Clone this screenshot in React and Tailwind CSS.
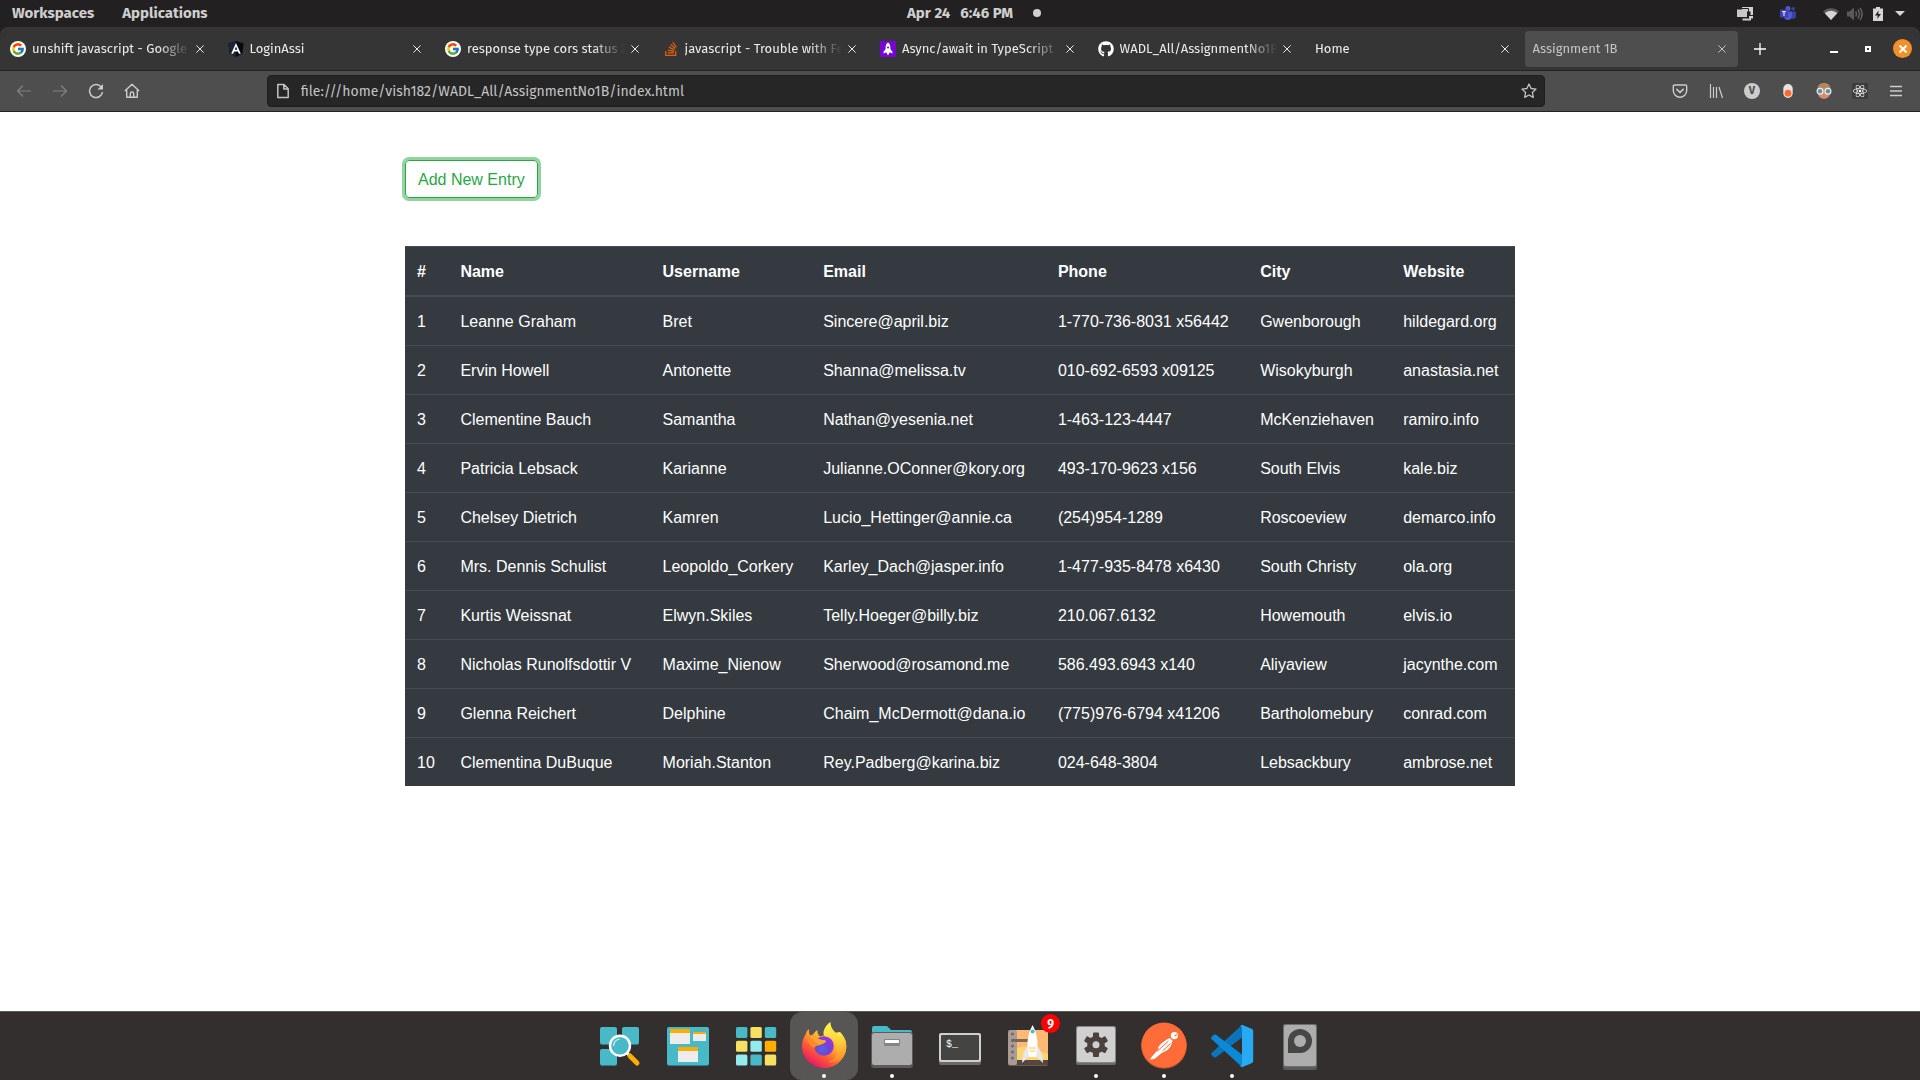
import React from "react";
import { FcGoogle } from "react-icons/fc";
import { FaGithub, FaReact, FaStackOverflow } from "react-icons/fa";

const users = [
  ["1", "Leanne Graham", "Bret", "Sincere@april.biz", "1-770-736-8031 x56442", "Gwenborough", "hildegard.org"],
  ["2", "Ervin Howell", "Antonette", "Shanna@melissa.tv", "010-692-6593 x09125", "Wisokyburgh", "anastasia.net"],
  ["3", "Clementine Bauch", "Samantha", "Nathan@yesenia.net", "1-463-123-4447", "McKenziehaven", "ramiro.info"],
  ["4", "Patricia Lebsack", "Karianne", "Julianne.OConner@kory.org", "493-170-9623 x156", "South Elvis", "kale.biz"],
  ["5", "Chelsey Dietrich", "Kamren", "Lucio_Hettinger@annie.ca", "(254)954-1289", "Roscoeview", "demarco.info"],
  ["6", "Mrs. Dennis Schulist", "Leopoldo_Corkery", "Karley_Dach@jasper.info", "1-477-935-8478 x6430", "South Christy", "ola.org"],
  ["7", "Kurtis Weissnat", "Elwyn.Skiles", "Telly.Hoeger@billy.biz", "210.067.6132", "Howemouth", "elvis.io"],
  ["8", "Nicholas Runolfsdottir V", "Maxime_Nienow", "Sherwood@rosamond.me", "586.493.6943 x140", "Aliyaview", "jacynthe.com"],
  ["9", "Glenna Reichert", "Delphine", "Chaim_McDermott@dana.io", "(775)976-6794 x41206", "Bartholomebury", "conrad.com"],
  ["10", "Clementina DuBuque", "Moriah.Stanton", "Rey.Padberg@karina.biz", "024-648-3804", "Lebsackbury", "ambrose.net"],
];

const columns = ["#", "Name", "Username", "Email", "Phone", "City", "Website"];

/* ---------- favicons ---------- */

const GoogleIcon = () => (
  <span className="flex size-4 items-center justify-center rounded-full bg-white">
    <FcGoogle className="size-3.5" />
  </span>
);

const AngularIcon = () => (
  <svg viewBox="0 0 16 16" className="size-4">
    <path d="M8 0l7.6 2.6-1.2 10L8 16l-6.4-3.4-1.2-10z" fill="#050a14" />
    <path d="M8 0L.4 2.6l1.2 10L8 16z" fill="#1b2434" />
    <path d="M8 2L3.2 12.8h1.9l1-2.4h3.8l1 2.4h1.9zm0 3.6l1.3 3.2H6.7z" fill="#fff" />
  </svg>
);

const RocketBadge = () => (
  <svg viewBox="0 0 16 16" className="size-4">
    <rect width="16" height="16" fill="#7604d4" />
    <path d="M8 1.6c1.8 1.3 2.4 3 2.4 5v1.6l2 2.2v2.2l-2.4-1H9.6L8 14.4l-1.6-2.8H6l-2.4 1v-2.2l2-2.2V6.600c0-2 .6-3.700 2.400-5z" fill="#fff" />
    <circle cx="8" cy="6.400" r="1" fill="#7604d4" />
  </svg>
);

const tabs = [
  { title: "unshift javascript - Google", icon: <GoogleIcon /> },
  { title: "LoginAssi", icon: <AngularIcon /> },
  { title: "response type cors status 2", icon: <GoogleIcon /> },
  { title: "javascript - Trouble with Fe", icon: <FaStackOverflow className="size-4 text-[#e0600f]" /> },
  { title: "Async/await in TypeScript -", icon: <RocketBadge /> },
  { title: "WADL_All/AssignmentNo1B", icon: <FaGithub className="size-4 text-white" /> },
  { title: "Home" },
  { title: "Assignment 1B", active: true },
];

const Cross = ({ className }) => (
  <svg viewBox="0 0 8 8" className={className} fill="none" stroke="currentColor">
    <path d="M.4.400l7.200 7.200M7.600.400L.4 7.600" />
  </svg>
);

/* ---------- desktop panel ---------- */

function TopBar() {
  return (
    <header className="flex h-[27px] shrink-0 items-center bg-[#232021] text-[#cfcfcf]">
      <nav className="flex flex-1 gap-7 pb-0.5 pl-3 text-[15px] leading-5 font-bold">
        <button>Workspaces</button>
        <button>Applications</button>
      </nav>
      <button className="flex items-center pb-0.5 pl-7 text-[15px] leading-5 font-bold">
        <span className="mr-2.5">Apr 24</span>
        <span className="mr-5">6:46 PM</span>
        <span className="size-2 rounded-full bg-[#d0d0d0]" />
      </button>
      <div className="flex flex-1 items-center justify-end pr-3">
        <button aria-label="Window tiling" className="mr-[27px]">
          <svg viewBox="0 0 16 14" className="h-3.5 w-4">
            <path d="M5 0h11v8h-2.500V4.500H5zM14 9.500v4H5.500v-2h7v-2z" fill="#d0d0d0" />
            <rect y="2.500" width="10" height="7.500" fill="#c8c8c8" />
            <path d="M5 1.500h6.500v10" fill="none" stroke="#232021" />
            <rect x="12" y="9" width="4" height="2.500" fill="#d0d0d0" />
          </svg>
        </button>
        <button aria-label="Teams" className="mr-[27px]">
          <svg viewBox="0 0 16 15" className="h-[15px] w-4">
            <circle cx="8" cy="2.600" r="2.500" fill="#4f58d0" />
            <circle cx="13.200" cy="2.800" r="1.800" fill="#3940a8" />
            <path d="M11 5.500h5v5a3 3 0 01-5 1.500z" fill="#3940a8" />
            <path d="M4 5.500h8v5a4.200 4.200 0 01-8 1z" fill="#4f58d0" />
            <rect y="3.500" width="8" height="8" rx="1" fill="#3b43b5" />
            <path d="M2.200 5.700h3.600M4 5.700v4.200" stroke="#fff" />
          </svg>
        </button>
        <button aria-label="Wi-Fi" className="mr-2">
          <svg viewBox="0 0 16 12" className="h-3 w-4">
            <path d="M0 3.500C4-1 12-1 16 3.500L8 12z" fill="#5d5b5b" />
            <path d="M1.800 5.300c3.500-3.400 8.900-3.400 12.400 0L8 12z" fill="#d6d6d6" />
          </svg>
        </button>
        <button aria-label="Volume" className="mr-2.5">
          <svg viewBox="0 0 16 14" className="h-3.5 w-4" fill="none" stroke="#625f60" strokeWidth="1.500">
            <path d="M0 4.500h2.500L7 .5v13l-4.500-4H0z" fill="#5b5959" stroke="none" />
            <path d="M8.500 4.500q2 2.500 0 5M10.800 2.500q3.400 4.500 0 9M13 .800q4.200 6.200 0 12.400" />
          </svg>
        </button>
        <button aria-label="Battery charging" className="mr-3">
          <svg viewBox="0 0 10 14" className="h-3.5 w-2.5">
            <path d="M3 0h4v1.500h3V14H0V1.500h3z" fill="#d6d6d6" />
            <path d="M5.600 3.500L2 8.500h2.700L4.200 12l3.800-5H5.300z" fill="#232021" />
          </svg>
        </button>
        <button aria-label="System menu" className="mr-[3px]">
          <svg viewBox="0 0 10 5" className="h-[5px] w-2.5">
            <path d="M0 0h10L5 5z" fill="#d6d6d6" />
          </svg>
        </button>
      </div>
    </header>
  );
}

/* ---------- browser chrome ---------- */

function Tab({ title, icon, active }) {
  return (
    <div
      className={
        active
          ? "flex h-9 min-w-0 flex-1 items-center rounded bg-[#4e4e4e] pr-1.5 pl-2 text-[#c6c6c6]"
          : "flex h-9 min-w-0 flex-1 items-center pr-1.5 pl-2 text-[#ececec]"
      }
    >
      <button className="flex min-w-0 flex-1 items-center gap-1.5 text-left">
        {icon && <span className="shrink-0">{icon}</span>}
        <span className="min-w-0 flex-1 overflow-hidden whitespace-nowrap [mask-image:linear-gradient(to_left,transparent,black_32px)]">
          {title}
        </span>
      </button>
      <button aria-label={"Close " + title} className="flex w-5 shrink-0 justify-center">
        <Cross className="size-2" />
      </button>
    </div>
  );
}

function TabBar() {
  return (
    <div className="bg-[#232021]">
      <div className="flex h-[43px] items-center rounded-t-lg bg-[#353535] text-[13px] leading-5">
        <div className="flex min-w-0 flex-1 gap-1 pl-0.5">
          {tabs.map((tab) => (
            <Tab key={tab.title} {...tab} />
          ))}
        </div>
        <div className="flex w-[182px] shrink-0 items-center text-white">
          <button aria-label="New tab" className="flex w-11 justify-center">
            <svg viewBox="0 0 12 12" className="size-3" stroke="currentColor">
              <path d="M6 0v12M0 6h12" strokeWidth="1.300" />
            </svg>
          </button>
          <div className="flex flex-1 items-center justify-end pr-2">
            <button aria-label="Minimize" className="flex w-[34px] justify-center">
              <svg viewBox="0 0 8 8" className="size-2">
                <rect y="6" width="8" height="2" fill="currentColor" />
              </svg>
            </button>
            <button aria-label="Maximize" className="flex w-[34px] justify-center">
              <svg viewBox="0 0 6 6" className="size-1.5">
                <rect x="1" y="1" width="4" height="4" fill="none" stroke="currentColor" strokeWidth="2" />
              </svg>
            </button>
            <button aria-label="Close window" className="ml-2 flex size-[19px] items-center justify-center rounded-full bg-[#f58f2a]">
              <Cross className="size-2 stroke-[2px]" />
            </button>
          </div>
        </div>
      </div>
    </div>
  );
}

const NavButton = ({ label, muted, children }) => (
  <button
    aria-label={label}
    className={
      muted
        ? "flex h-8 w-9 items-center justify-center text-[#828282]"
        : "flex h-8 w-9 items-center justify-center text-[#cccccc]"
    }
  >
    {children}
  </button>
);

const line = { viewBox: "0 0 16 16", fill: "none", stroke: "currentColor", strokeWidth: 1.2, className: "size-4" };

function Toolbar() {
  return (
    <div className="flex h-[42px] shrink-0 items-center border-y border-[#232323] bg-[#4e4e4e] px-1.5">
      <div className="flex">
        <NavButton label="Back" muted>
          <svg {...line}><path d="M15 8H1.500M7 2.500L1.500 8 7 13.500" /></svg>
        </NavButton>
        <NavButton label="Forward" muted>
          <svg {...line}><path d="M1 8h13.500M9 2.500L14.500 8 9 13.500" /></svg>
        </NavButton>
        <NavButton label="Reload">
          <svg {...line}>
            <path d="M13.500 4.500A6.500 6.500 0 1014.500 9" strokeWidth="1.500" />
            <path d="M15 1v5.500H9.500z" fill="currentColor" stroke="none" />
          </svg>
        </NavButton>
        <NavButton label="Home">
          <svg {...line} strokeWidth="1.400">
            <path d="M.8 8L8 1.300 15.200 8M2.700 7v7.300h10.600V7M6.300 14v-3.300a1.700 1.700 0 013.400 0V14" strokeLinejoin="round" />
          </svg>
        </NavButton>
      </div>
      <div className="flex-1" />
      <div className="mx-0.5 flex h-8 flex-[11] items-center rounded border border-[#1f1f1f] bg-[#262626] px-[7px] text-[#c4c4c4]">
        <svg {...line} strokeWidth="1.500">
          <path d="M3.500 1.500h5.500l4.200 4.200v8.800H2.800V1.500zM8.800 1.500V6h4.400" strokeLinejoin="round" />
        </svg>
        <input
          aria-label="Address"
          defaultValue="file:///home/vish182/WADL_All/AssignmentNo1B/index.html"
          className="ml-2.5 min-w-0 flex-1 bg-transparent pt-0.5 text-[14px] leading-5 outline-none"
        />
        <button aria-label="Bookmark this page">
          <svg {...line} strokeWidth="1.300">
            <path d="M8 1l2.100 4.500 4.900.600-3.600 3.400.900 4.900L8 12l-4.300 2.400.900-4.900L1 6.100l4.900-.600z" strokeLinejoin="round" />
          </svg>
        </button>
      </div>
      <div className="flex-1" />
      <div className="flex">
        <NavButton label="Save to Pocket">
          <svg {...line} strokeWidth="1.400">
            <path d="M2.500 2h11q1.200 0 1.200 1.200V7.500a6.700 6.700 0 01-13.400 0V3.200Q1.300 2 2.500 2z" />
            <path d="M4.800 6.300L8 9.300l3.200-3" strokeWidth="1.600" strokeLinecap="round" />
          </svg>
        </NavButton>
        <NavButton label="Library">
          <svg {...line}><path d="M2.500 1v14M5.500 4v11M8.500 4v11M11 4l3.500 11" /></svg>
        </NavButton>
        <NavButton label="Account">
          <span className="flex size-4 items-center justify-center rounded-full bg-[#cccccc] text-[11px] leading-4 font-bold text-[#4e4e4e]">V</span>
        </NavButton>
        <NavButton label="Switch extension">
          <svg viewBox="0 0 16 16" className="size-4">
            <rect x="3.300" y="1" width="9.400" height="14" rx="4.700" fill="#e4e4e4" />
            <circle cx="8" cy="10.200" r="3.400" fill="#ff6a2a" />
          </svg>
        </NavButton>
        <NavButton label="Goggles extension">
          <svg viewBox="0 0 16 16" className="size-4">
            <path d="M2 6q0-6 6-6t6 6v4q0 5-6 6-6-1-6-6z" fill="#e2876a" />
            <path d="M1.500 7Q1 .500 8 .300 15 .500 14.500 7L12 4.500 8 5 4 4.500z" fill="#ad8a5c" />
            <circle cx="4" cy="8.300" r="2.900" fill="#4e97a6" stroke="#eee" strokeWidth="1.200" />
            <circle cx="12" cy="8.300" r="2.900" fill="#4e97a6" stroke="#eee" strokeWidth="1.200" />
          </svg>
        </NavButton>
        <NavButton label="React developer tools">
          <span className="flex size-4 items-center justify-center bg-[#3d3d3d]">
            <FaReact className="size-3.5 text-white" />
          </span>
        </NavButton>
        <NavButton label="Menu">
          <svg {...line} strokeWidth="1.300"><path d="M2 3.500h12M2 8h12M2 12.500h12" /></svg>
        </NavButton>
      </div>
    </div>
  );
}

/* ---------- page ---------- */

function Page() {
  return (
    <main className="flex-1 bg-white font-['Liberation_Sans',Arial,sans-serif] text-base">
      <div className="mx-auto max-w-[1110px] py-12">
        <button className="rounded border border-[#28a745] px-3 pt-[7px] pb-[5px] text-[#28a745] shadow-[0_0_0_3px_rgba(40,167,69,0.5)]">
          Add New Entry
        </button>
        <table className="mt-12 w-full border-collapse bg-[#343a40] text-left text-white">
          <thead>
            <tr>
              {columns.map((c) => (
                <th key={c} scope="col" className="border-t border-b-2 border-[#454d55] px-3 pt-[13px] pb-[11px] font-bold">{c}</th>
              ))}
            </tr>
          </thead>
          <tbody>
            {users.map((row) => (
              <tr key={row[0]}>
                {row.map((cell) => (
                  <td key={cell} className="border-t border-[#454d55] px-3 pt-[13px] pb-[11px]">{cell}</td>
                ))}
              </tr>
            ))}
          </tbody>
        </table>
      </div>
    </main>
  );
}

/* ---------- dock ---------- */

const teal = "#48b9c7";
const yellow = "#f6e061";
const orange = "#ffad00";
const aqua = "#94ebeb";

const LauncherIcon = () => (
  <>
    <g fill="#30808b"><rect x="14" y="16" width="17" height="17" rx="2" /><rect x="36" y="16" width="17" height="17" rx="2" /><rect x="14" y="38" width="17" height="16" rx="2" /></g>
    <g fill={teal}><rect x="14" y="15" width="17" height="17" rx="2" /><rect x="36" y="15" width="17" height="17" rx="2" /><rect x="14" y="37" width="17" height="16" rx="2" /></g>
    <path d="M41 41l3 3" stroke="#fff" strokeWidth="3" />
    <path d="M44 44l7 7" stroke={orange} strokeWidth="5" strokeLinecap="round" />
    <circle cx="34" cy="33.700" r="10" fill={teal} stroke="#fff" strokeWidth="2.400" />
    <path d="M27.500 34q.5-6 6-7" fill="none" stroke="#e8f7f9" strokeWidth="1.200" />
  </>
);

const WorkspacesIcon = () => (
  <>
    <rect x="13" y="16" width="42" height="38" rx="2" fill="#30808b" />
    <rect x="13" y="15" width="42" height="38" rx="2" fill={teal} />
    {[[16, 17, 20, 15, 4], [39, 20, 13, 9, 2], [24, 35, 20, 15, 4]].map(([x, y, w, h, t]) => (
      <g key={x}><rect x={x} y={y} width={w} height={h} fill="#ececec" /><rect x={x} y={y} width={w} height={t} fill={orange} /></g>
    ))}
  </>
);

const gridColors = [[teal, yellow, teal], [yellow, aqua, orange], [aqua, teal, yellow]];

const AppsIcon = () => (
  <>
    {gridColors.map((row, r) =>
      row.map((fill, c) => (
        <rect key={r + "-" + c} x={14 + c * 14.4} y={15 + r * 13.8} width="11.400" height="11" rx="1.500" fill={fill} />
      ))
    )}
  </>
);

const FirefoxIcon = () => (
  <>
    <defs>
      <linearGradient id="ff-body" x1=".85" y1=".1" x2=".2" y2=".95">
        <stop offset="0" stopColor="#fff04a" /><stop offset=".35" stopColor="#ffb02e" /><stop offset=".65" stopColor="#ff5a36" /><stop offset="1" stopColor="#e5106e" />
      </linearGradient>
      <linearGradient id="ff-flame" x1=".5" y1="0" x2=".6" y2="1">
        <stop offset="0" stopColor="#fff44f" /><stop offset=".5" stopColor="#ffd03a" /><stop offset="1" stopColor="#ff8a24" />
      </linearGradient>
      <radialGradient id="ff-globe" cx=".4" cy=".65" r=".7">
        <stop offset="0" stopColor="#5a63e0" /><stop offset=".5" stopColor="#6c45d0" /><stop offset="1" stopColor="#a52fe8" />
      </radialGradient>
    </defs>
    <path d="M19 17c-.5 3 .3 5 1.200 6.500l2.800-1q2-3.500 4.500-4.500c-.4 3 .8 5 2.500 6.500L38 22l12-2c4 4 6.500 9 6.200 15.500C55.700 47 46 56 34.500 56S12.300 47 12 35c-.1-5 1.200-9 3.500-12.500q.5-3.500 3.500-5.500z" fill="url(#ff-body)" />
    <path d="M40.500 10c0 5 2 7.500 5.500 11 2 2 3.500 3 4 5.500 1-1 1.200-3.500 1-5 4.500 5 6 10 5 16C54.500 47 46 51 38 50c7-2 10-7 9.500-13-.5-5.500-4-9-7.500-10.500-4-2-7-3-6.500-6C34 16 37.500 12 40.500 10z" fill="url(#ff-flame)" />
    <circle cx="34" cy="34" r="9.800" fill="url(#ff-globe)" />
    <path d="M17 26c4-2 8-1 11 1l8 1.800c.5 2-3 3.200-6 4-3 1-4.500 1.500-5.500 3-3-1-6-4-7.500-9.800z" fill="#ff8a2c" />
    <path d="M19 24c5-1 8 1.500 10 3.200l7 1.600c0 2-4 3.200-7 4.200-2.500-2-6-5-10-9z" fill="#ffa52e" />
  </>
);

const FilesIcon = () => (
  <>
    <path d="M14 24V16q0-2 2-2h13l4 4h19q2 0 2 2v4z" fill={teal} />
    <rect x="13" y="22" width="42" height="34" rx="3" fill="#5c5b5a" />
    <rect x="13" y="20" width="42" height="33" rx="3" fill="#5c5b5a" />
    <rect x="14" y="21" width="40" height="32" rx="2.500" fill="#adadad" />
    <rect x="26" y="27" width="16" height="7" rx="1" fill="#858585" />
    <rect x="27" y="28" width="14" height="3" rx=".5" fill="#fff" />
  </>
);

const TerminalIcon = () => (
  <>
    <rect x="13" y="22" width="42" height="31" rx="2" fill="#6a6a69" />
    <rect x="13" y="21" width="42" height="29" rx="2" fill="#d0d0d0" />
    <rect x="15" y="23" width="38" height="25" rx="1" fill="#444443" />
    <text x="20" y="35" fill="#fff" fontSize="10" fontFamily="Liberation Mono, monospace">$_</text>
  </>
);

const RocketIcon = () => (
  <>
    <rect x="14" y="19" width="40" height="35" rx="2" fill="#6a5c55" />
    <path d="M20 18h32q2 0 2 2v28H20z" fill="#ffb974" />
    <path d="M23 36q9-3 15 0t16 6v6H23z" fill="#fcd672" />
    <path d="M23 48h31v4q0 1-1 1H23z" fill="#564640" />
    <rect x="14" y="18" width="9" height="35" rx="2" fill="#a99c97" />
    {[22, 34, 40, 46].map((y) => <circle key={y} cx="18.500" cy={y} r="1.500" fill="#75665f" />)}
    <rect x="17" y="27" width="20" height="3" rx="1" fill="#7c655a" />
    <path d="M34 34q-6 6-6 17l6-6h9l6 6q0-11-6-17z" fill="#e8e8e8" />
    <path d="M38.600 13q5.400 10 4.900 21L42 45h-7l-1.500-11q-.5-11 5.100-21z" fill="#fff" />
    <circle cx="38.600" cy="19.500" r="2" fill={teal} />
    <path d="M35 36h7M35.500 39h6" stroke="#ffc64a" />
  </>
);

const SettingsIcon = () => (
  <>
    <rect x="14" y="18" width="40" height="35" rx="2" fill="#6a6a69" />
    <rect x="14" y="14" width="40" height="37" rx="2" fill="#878787" />
    <rect x="15" y="15" width="38" height="35" rx="2" fill="#d0d0d0" />
    <g fill="#4a423d">
      {[0, 60, 120].map((a) => <rect key={a} x="31" y="20.500" width="6" height="24.400" rx="1" transform={`rotate(${a} 34 32.700)`} />)}
      <circle cx="34" cy="32.700" r="8.800" />
    </g>
    <circle cx="34" cy="32.700" r="3.500" fill="#d0d0d0" />
  </>
);

const PostmanIcon = () => (
  <>
    <circle cx="34" cy="34" r="22.800" fill="#cf5426" />
    <circle cx="34" cy="33" r="22.500" fill="#ff6c37" />
    <circle cx="44.400" cy="23.600" r="3.600" fill="#fff" />
    <path d="M44.500 24l2.500-1.500" stroke="#ff6c37" strokeWidth="1.200" />
    <path d="M39.500 26l3 2.500q-1 6-5 9.500L31 41.500l-6.500 5.500-4.500.500 1.500-2.500 8-9-2 .500q3-6 12-10.500z" fill="#fff" />
    <path d="M38.500 29L27 39.500M40.500 31.500L32.500 39" stroke="#ff6c37" strokeWidth="1" />
  </>
);

const CodeIcon = () => (
  <>
    <path d="M44 13L13.500 41q-1 1 0 2l2.500 2.200q1 .8 2 0L44 25.500z" fill="#0b74bb" />
    <path d="M44 55L13.500 27q-1-1 0-2l2.500-2.200q1-.8 2 0L44 42.500z" fill="#0a8ad6" />
    <path d="M44 12.700l10 4.300q1.200.6 1.200 2v30q0 1.400-1.200 2L44 55.200l-2-1.200q2 0 2-2V16q0-2-2-2z" fill="#29a9f2" />
  </>
);

const DiskIcon = () => (
  <>
    <rect x="17" y="13" width="34" height="45" rx="2" fill="#5a5a5a" />
    <rect x="17" y="12" width="34" height="43" rx="2" fill="#6e6e6e" />
    <rect x="18" y="13" width="32" height="41" rx="2" fill="#adadad" />
    <path d="M22 41V29a12 12 0 1112 12z" fill="#464645" />
    <circle cx="34" cy="29" r="6" fill="#adadad" />
  </>
);

const dock = [
  { name: "Launcher", Icon: LauncherIcon },
  { name: "Workspaces", Icon: WorkspacesIcon },
  { name: "Applications", Icon: AppsIcon },
  { name: "Firefox", Icon: FirefoxIcon, running: true, focused: true },
  { name: "Files", Icon: FilesIcon, running: true },
  { name: "Terminal", Icon: TerminalIcon },
  { name: "Pop!_Shop", Icon: RocketIcon, badge: "9" },
  { name: "Settings", Icon: SettingsIcon, running: true },
  { name: "Postman", Icon: PostmanIcon, running: true },
  { name: "Visual Studio Code", Icon: CodeIcon, running: true },
  { name: "Disk", Icon: DiskIcon },
];

function Dock() {
  return (
    <footer className="flex shrink-0 justify-center border-t border-[#5b5856] bg-[#332f2e]">
      {dock.map(({ name, Icon, running, focused, badge }) => (
        <button
          key={name}
          aria-label={name}
          className={focused ? "relative size-[68px] rounded-xl bg-[#585655]" : "relative size-[68px]"}
        >
          <svg viewBox="0 0 68 68" className="size-full">
            <Icon />
            {running && <circle cx="34" cy="64" r="2" fill="#fff" />}
          </svg>
          {badge && (
            <span className="absolute top-0.5 right-0.5 flex size-[19px] items-center justify-center rounded-full bg-[#fe0000] text-[12px] leading-4 font-bold text-white">
              {badge}
            </span>
          )}
        </button>
      ))}
    </footer>
  );
}

export default function App() {
  return (
    <div className="flex min-h-screen flex-col font-['Fira_Sans',Roboto,'Noto_Sans',sans-serif]">
      <TopBar />
      <TabBar />
      <Toolbar />
      <Page />
      <Dock />
    </div>
  );
}
